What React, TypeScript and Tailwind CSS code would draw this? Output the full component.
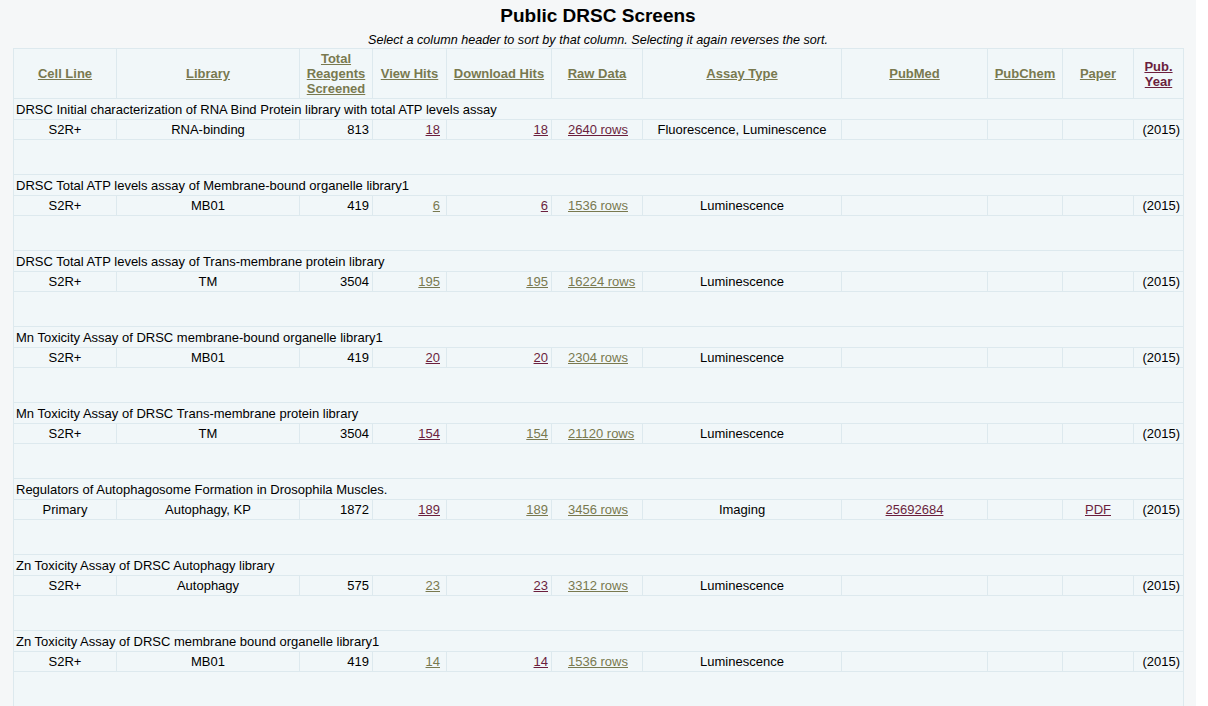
import React from "react";

const O = "text-[#79794f]";
const M = "text-[#6b1f3d]";
type L = [string, boolean];
const rows: { t: string; c: string; lib: string; n: string; v: L; d: L; r: L; a: string; pm?: L; pdf?: L }[] = [
  { t: "DRSC Initial characterization of RNA Bind Protein library with total ATP levels assay", c: "S2R+", lib: "RNA-binding", n: "813", v: ["18", true], d: ["18", true], r: ["2640 rows", true], a: "Fluorescence, Luminescence" },
  { t: "DRSC Total ATP levels assay of Membrane-bound organelle library1", c: "S2R+", lib: "MB01", n: "419", v: ["6", false], d: ["6", true], r: ["1536 rows", false], a: "Luminescence" },
  { t: "DRSC Total ATP levels assay of Trans-membrane protein library", c: "S2R+", lib: "TM", n: "3504", v: ["195", false], d: ["195", false], r: ["16224 rows", false], a: "Luminescence" },
  { t: "Mn Toxicity Assay of DRSC membrane-bound organelle library1", c: "S2R+", lib: "MB01", n: "419", v: ["20", true], d: ["20", true], r: ["2304 rows", false], a: "Luminescence" },
  { t: "Mn Toxicity Assay of DRSC Trans-membrane protein library", c: "S2R+", lib: "TM", n: "3504", v: ["154", true], d: ["154", false], r: ["21120 rows", false], a: "Luminescence" },
  { t: "Regulators of Autophagosome Formation in Drosophila Muscles.", c: "Primary", lib: "Autophagy, KP", n: "1872", v: ["189", true], d: ["189", false], r: ["3456 rows", false], a: "Imaging", pm: ["25692684", true], pdf: ["PDF", true] },
  { t: "Zn Toxicity Assay of DRSC Autophagy library", c: "S2R+", lib: "Autophagy", n: "575", v: ["23", false], d: ["23", true], r: ["3312 rows", false], a: "Luminescence" },
  { t: "Zn Toxicity Assay of DRSC membrane bound organelle library1", c: "S2R+", lib: "MB01", n: "419", v: ["14", false], d: ["14", true], r: ["1536 rows", false], a: "Luminescence" },
];

const Lk = ({ l }: { l: L }) => <a className={`underline ${l[1] ? M : O}`} href="#">{l[0]}</a>;
const td = "border border-[#dde9ee] px-[3px] h-[20px] py-0";

export default function App() {
  const widths = [103, 183, 73, 74, 105, 91, 199, 146, 75, 71, 50];
  const heads = ["Cell Line", "Library", "Total Reagents Screened", "View Hits", "Download Hits", "Raw Data", "Assay Type", "PubMed", "PubChem", "Paper", "Pub. Year"];
  return (
    <div className="bg-white min-h-[706px] text-[13px] text-black" style={{ fontFamily: '"Liberation Sans", Arial, sans-serif' }}>
      <div className="w-[1196px] bg-[#f5f7f8] min-h-[706px]">
        <h1 className="text-center font-bold text-[19px] leading-[20px] pt-[6px] w-[1196px]">Public DRSC Screens</h1>
        <p className="text-center italic text-[12.6px] leading-[14px] mt-[7px]">Select a column header to sort by that column. Selecting it again reverses the sort.</p>
        <div className="pl-[13px] pr-[13px] pt-[1px]">
          <table className="border-collapse table-fixed bg-[#f1f7f9] w-[1170px] leading-[15px]">
            <colgroup>{widths.map((w, i) => <col key={i} style={{ width: w }} />)}</colgroup>
            <thead>
              <tr className="h-[50px]">
                {heads.map((h, i) => (
                  <th key={i} className={`border border-[#dde9ee] font-bold text-center px-[2px] ${i === 10 ? M : O}`}>
                    <a href="#" className="underline">{h}</a>
                  </th>
                ))}
              </tr>
            </thead>
            <tbody>
              {rows.map((r, i) => (
                <React.Fragment key={i}>
                  <tr className="h-[21px]"><td colSpan={11} className="border border-[#dde9ee] px-[2px] pt-[1px] align-middle">{r.t}</td></tr>
                  <tr className="h-[20px]">
                    <td className={`${td} text-center`}>{r.c}</td>
                    <td className={`${td} text-center`}>{r.lib}</td>
                    <td className={`${td} text-right`}>{r.n}</td>
                    <td className={`${td} text-right pr-[6px]`}><Lk l={r.v} /></td>
                    <td className={`${td} text-right`}><Lk l={r.d} /></td>
                    <td className={`${td} text-left pl-[16px]`}><Lk l={r.r} /></td>
                    <td className={`${td} text-center`}>{r.a}</td>
                    <td className={`${td} text-center`}>{r.pm && <Lk l={r.pm} />}</td>
                    <td className={td}></td>
                    <td className={`${td} text-center`}>{r.pdf && <Lk l={r.pdf} />}</td>
                    <td className={`${td} text-right`}>(2015)</td>
                  </tr>
                  <tr className="h-[35px]"><td colSpan={11} className="border border-[#dde9ee]"></td></tr>
                </React.Fragment>
              ))}
            </tbody>
          </table>
        </div>
      </div>
    </div>
  );
}
